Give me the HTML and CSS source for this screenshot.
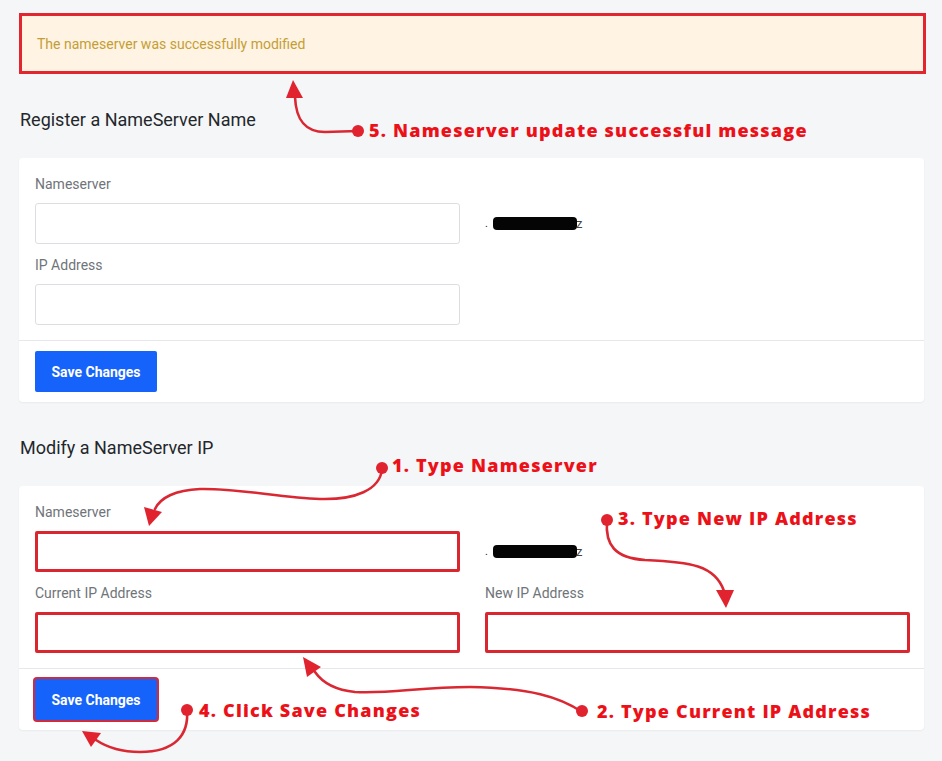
FILE: index.html
```html
<!DOCTYPE html>
<html lang="en">
<head>
<meta charset="utf-8">
<title>Nameservers</title>
<link rel="stylesheet" href="styles.css">
</head>
<body>
<div class="page">
  <div class="alert">The nameserver was successfully modified</div>

  <h2 class="section-title">Register a NameServer Name</h2>
  <div class="card">
    <div class="card-body">
      <div class="row">
        <div class="field">
          <label class="label">Nameserver</label>
          <div class="input"></div>
        </div>
        <div class="suffix"><span class="dot">.</span><span class="blob"></span><span class="tail">z</span></div>
      </div>
      <div class="row">
        <div class="field">
          <label class="label">IP Address</label>
          <div class="input"></div>
        </div>
      </div>
    </div>
    <div class="card-footer">
      <button class="btn">Save Changes</button>
    </div>
  </div>

  <h2 class="section-title">Modify a NameServer IP</h2>
  <div class="card">
    <div class="card-body">
      <div class="row">
        <div class="field">
          <label class="label">Nameserver</label>
          <div class="input hl"></div>
        </div>
        <div class="suffix"><span class="dot">.</span><span class="blob"></span><span class="tail">z</span></div>
      </div>
      <div class="row">
        <div class="field">
          <label class="label">Current IP Address</label>
          <div class="input hl"></div>
        </div>
        <div class="field">
          <label class="label">New IP Address</label>
          <div class="input hl"></div>
        </div>
      </div>
    </div>
    <div class="card-footer">
      <button class="btn btn-hl">Save Changes</button>
    </div>
  </div>
</div>

<div class="annotations">
  <svg class="arrows" width="942" height="761" viewBox="0 0 942 761">
    <g fill="none" stroke="#da2833" stroke-width="2.6" stroke-linecap="round">
      <path d="M358,131 L325,132 C305,132 296,120 295,97"/>
      <path d="M382,469 C380,490 355,500 320,499 C280,498 240,488 200,489 C175,490 160,498 155,509"/>
      <path d="M607,521 C605,545 615,558 645,560 C690,562 715,565 724,591"/>
      <path d="M582,712 C560,697 530,688 470,687 C420,687 390,694 355,692 C335,690 322,682 315,672"/>
      <path d="M187,710 C189,735 175,752 140,752 C118,752 105,746 96,740"/>
    </g>
    <g fill="#e0232f">
      <circle cx="358" cy="131" r="6"/>
      <polygon points="286,98 303,98 293,80"/>
      <circle cx="382" cy="468" r="6"/>
      <polygon points="144,507 162,512 149,526"/>
      <circle cx="607" cy="520" r="6"/>
      <polygon points="716,590 734,590 726,608"/>
      <circle cx="582" cy="711" r="6"/>
      <polygon points="321,667 307,677 303,657"/>
      <circle cx="187" cy="710" r="6"/>
      <polygon points="101,733 91,747 82,731"/>
    </g>
  </svg>
  <span class="note n5">5. Nameserver update successful message</span>
  <span class="note n1">1. Type Nameserver</span>
  <span class="note n3">3. Type New IP Address</span>
  <span class="note n2">2. Type Current IP Address</span>
  <span class="note n4">4. Click Save Changes</span>
</div>
</body>
</html>
```

FILE: styles.css
```css
* { box-sizing: border-box; }

html, body {
  margin: 0;
  padding: 0;
}

body {
  background: #f5f6f8;
  font-family: Roboto, "Liberation Sans", Arial, sans-serif;
  width: 942px;
  height: 761px;
  overflow: hidden;
  position: relative;
}

.page {
  padding: 13px 18px 0 19px;
}

.alert {
  width: 907px;
  height: 61px;
  border: 3px solid #e1262f;
  background: #fff3e3;
  color: #c49e35;
  font-size: 14px;
  display: flex;
  align-items: center;
  padding-left: 15px;
}

.section-title {
  margin: 34px 0 26px 1px;
  font-size: 18px;
  line-height: 24px;
  font-weight: 400;
  color: #23272b;
}

.card {
  width: 905px;
  background: #fff;
  border-radius: 4px;
  box-shadow: 0 1px 2px rgba(0, 0, 0, 0.05);
}

.card-body {
  padding: 16px 14px 15px 16px;
  display: flex;
  flex-direction: column;
  gap: 11px;
}

.row {
  display: grid;
  grid-template-columns: 425px 425px;
  column-gap: 25px;
}

.field {
  display: flex;
  flex-direction: column;
}

.label {
  font-size: 14px;
  line-height: 20px;
  color: #6f7479;
  margin-bottom: 9px;
}

.input {
  height: 41px;
  border: 1px solid #dcdee1;
  border-radius: 3px;
  background: #fff;
}

.input.hl {
  border: 3px solid #d9262f;
  border-radius: 2px;
}

.suffix {
  margin-top: 29px;
  height: 41px;
  display: flex;
  align-items: center;
  font-size: 13px;
  color: #222;
}

.dot {
  font-size: 11px;
  margin-right: 5px;
}

.blob {
  display: inline-block;
  width: 84px;
  height: 13px;
  background: #050505;
  border-radius: 4px;
  filter: blur(0.6px);
}

.tail {
  margin-left: -1px;
  font-size: 13px;
  color: #444;
}

.card-footer {
  border-top: 1px solid #e6e8eb;
  padding: 10px 16px;
}

.btn {
  display: block;
  height: 41px;
  width: 122px;
  border: 0;
  border-radius: 2px;
  background: #1663fc;
  color: #fff;
  font-family: Roboto, "Liberation Sans", Arial, sans-serif;
  font-size: 14px;
  font-weight: 700;
  padding: 0;
}

.btn-hl {
  box-shadow: 0 0 0 2px #d12a3a;
}

.annotations {
  position: absolute;
  top: 0;
  left: 0;
  width: 942px;
  height: 761px;
  pointer-events: none;
}

.arrows {
  position: absolute;
  top: 0;
  left: 0;
}

.note {
  position: absolute;
  font-family: "Open Sans", "DejaVu Sans", sans-serif;
  font-weight: 800;
  font-size: 18px;
  line-height: 20px;
  color: #ec1119;
  white-space: nowrap;
  letter-spacing: 1.2px;
}

.n5 { left: 369px; top: 120px; }
.n1 { left: 392px; top: 455px; }
.n3 { left: 618px; top: 508px; }
.n2 { left: 597px; top: 701px; }
.n4 { left: 199px; top: 700px; }
```
